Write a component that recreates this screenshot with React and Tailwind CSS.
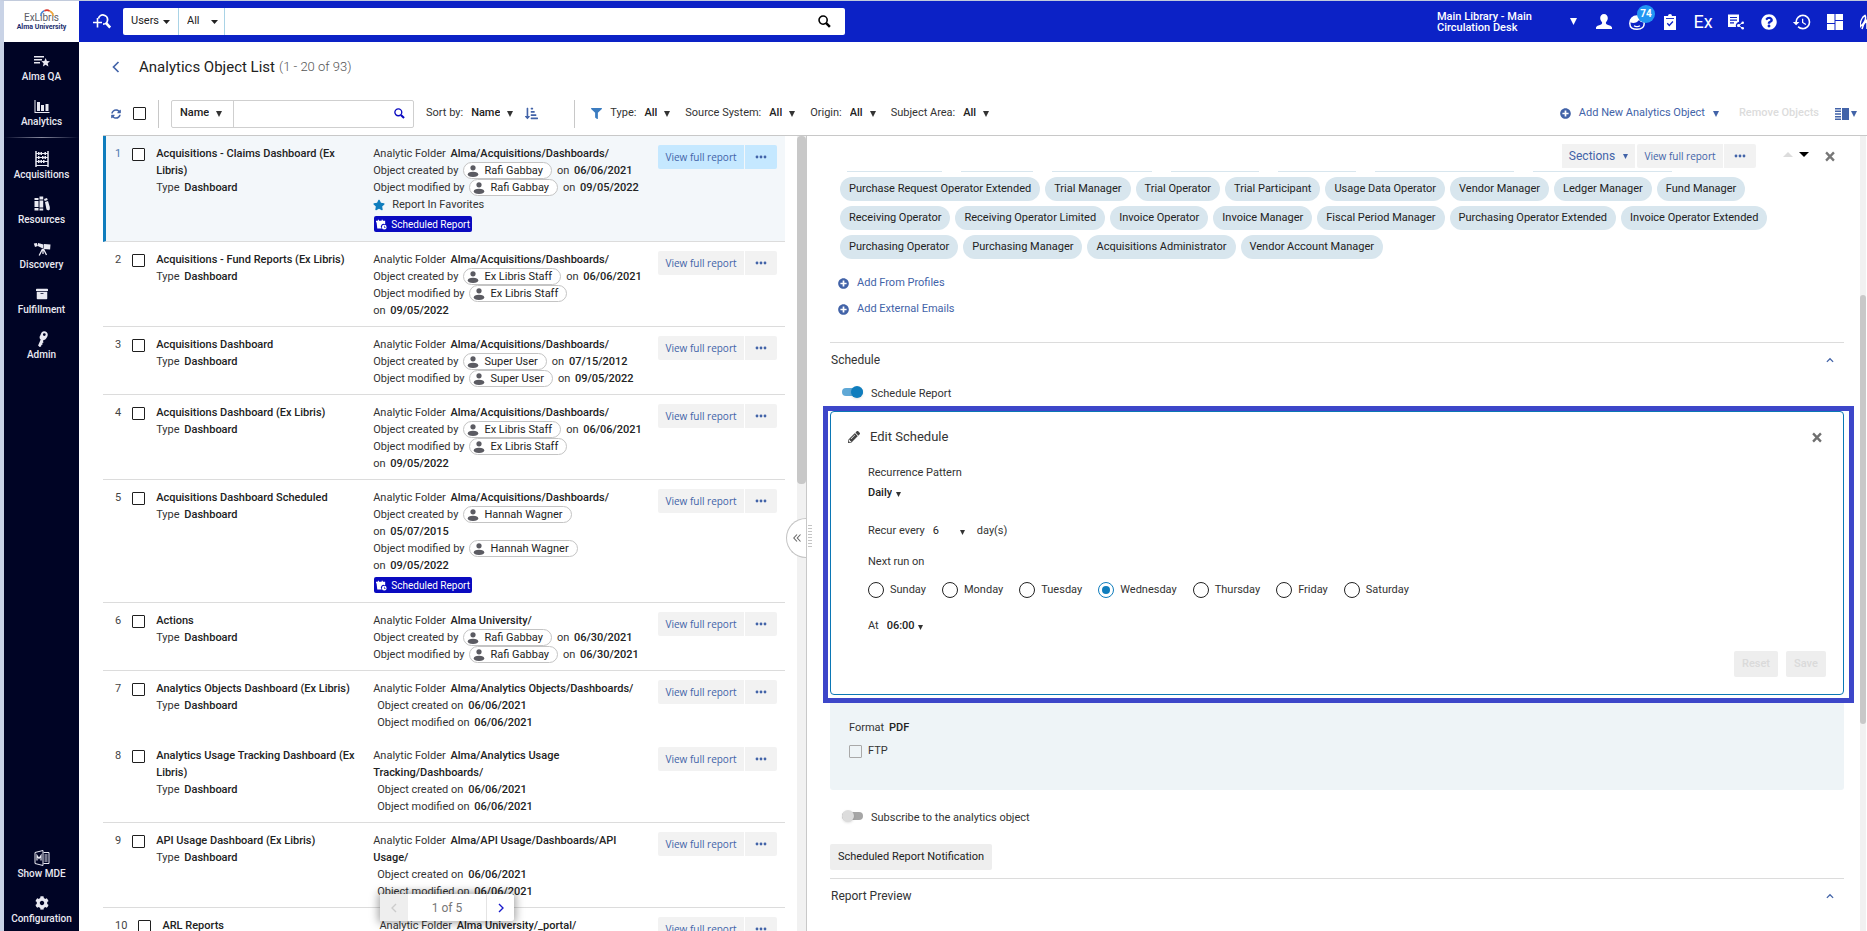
import { useId } from "react";
import {
  FaArchive,
  FaCog,
  FaFilter,
  FaPencilAlt,
  FaPlusCircle,
  FaQuestionCircle,
  FaSortAmountDownAlt,
  FaStar,
  FaSyncAlt,
} from "react-icons/fa";
import { MdHistory } from "react-icons/md";

/* ---------- icons ---------- */

function Caret({ className = "h-[6px] w-[6px]", up = false }) {
  return (
    <svg viewBox="0 0 8 7" preserveAspectRatio="none" fill="currentColor" aria-hidden="true" className={`pointer-events-none shrink-0 ${className}`}>
      <path d={up ? "M0 7h8L4 0z" : "M0 0h8L4 7z"} />
    </svg>
  );
}

function Chevron({ dir, className }) {
  const d = { left: "M9 2 3 8l6 6", right: "M3 2l6 6-6 6", up: "M1 11l5-5 5 5" }[dir];
  return (
    <svg viewBox="0 0 12 16" fill="none" stroke="currentColor" strokeWidth="2" aria-hidden="true" className={className}>
      <path d={d} />
    </svg>
  );
}

function Magnifier({ className }) {
  return (
    <svg viewBox="0 0 14 14" fill="none" stroke="currentColor" aria-hidden="true" className={className}>
      <circle cx="5.5" cy="5.5" r="4.4" strokeWidth="1.7" />
      <path d="m8.8 8.8 4 4" strokeWidth="2.6" />
    </svg>
  );
}

function Close({ className }) {
  return (
    <svg viewBox="0 0 12 12" fill="none" stroke="currentColor" strokeWidth="2.8" aria-hidden="true" className={className}>
      <path d="M1.3 1 10.7 11M10.7 1 1.3 11" />
    </svg>
  );
}

function Dots() {
  return (
    <svg viewBox="0 0 12 4" fill="currentColor" aria-hidden="true" className="h-1 w-3">
      <circle cx="2" cy="2" r="1.4" />
      <circle cx="6" cy="2" r="1.4" />
      <circle cx="10" cy="2" r="1.4" />
    </svg>
  );
}

const navSvg = "h-4 w-4";

const QaIcon = () => (
  <svg viewBox="0 0 16 16" fill="currentColor" className={navSvg}>
    <path d="M0 3h10v1.400H0zM0 6h8v1.400H0zM0 9h6v1.400H0z" />
    <path d="m11.600 5 1.300 2.900 3.100.3-2.300 2.100.7 3.100-2.800-1.600-2.700 1.600.7-3.100L7.300 8.200l3.100-.3z" />
  </svg>
);
const ChartIcon = () => (
  <svg viewBox="0 0 16 16" fill="currentColor" className={navSvg}>
    <path d="M.5 2h1v12h14v1H.5zM3 4h3v9H3zM7 7h3v6H7zM11.500 6h3v7h-3z" />
  </svg>
);
const AbacusIcon = () => (
  <svg viewBox="0 0 16 16" className={navSvg}>
    <path d="M2 0v16M14 0v16" stroke="currentColor" strokeWidth="1.500" />
    <path d="M2 2.500h12M2 6.500h12M2 10.500h12M2 14.500h12" stroke="currentColor" strokeWidth="1" />
    <path d="M4 1h1.500v3H4zM6.500 1H8v3H6.500zM10.500 1H12v3h-1.500zM4 5h1.500v3H4zM8 5h1.500v3H8zM10.500 5H12v3h-1.500zM4 9h1.500v3H4zM6.500 9H8v3H6.500zM9 9h1.500v3H9z" fill="currentColor" />
  </svg>
);
const BooksIcon = () => (
  <svg viewBox="0 0 16 16" fill="currentColor" className={navSvg}>
    <path d="M.5 2h4v2h-4zM.5 5h4v6h-4zM.5 12h4v2.500h-4zM5.500.5h3.700v3H5.500zM5.500 4.500h3.700v7H5.500zM5.500 12.500h3.700v2H5.500z" />
    <path d="m10 3 3-1 .7 2-3 1zM11 6l3-1 1.800 6v2.500l-1.500 1-1.800-1z" />
  </svg>
);
const TelescopeIcon = () => (
  <svg viewBox="0 0 18 16" fill="currentColor" className="h-4 w-[18px]">
    <path d="m.8 2.500 3-.5 1 3-2.800 1zM5 2l5.500 1.500-.7 4L4.800 5zM11 3l6.500.6-.4 5L10.400 8z" />
    <path d="m9.500 8-3.300 6.500M10 8v5M10.500 8l3 6" stroke="currentColor" strokeWidth="1.300" fill="none" />
  </svg>
);
const KeyIcon = () => (
  <svg viewBox="0 0 16 16" className={navSvg}>
    <path
      fillRule="evenodd"
      fill="currentColor"
      d="M9.200.4c2.900-.5 4.900 1.300 4.500 3.900-.2 1.700-1.200 2.400-1.600 3.300-.5 1-1.500 1.500-2.500 1.300l-.6 1.200.5 1.300-1.200.6.3 1.400-1.200.6-.3 1.400-1.500.6-1.500-1.600L6.700 8.500c-1-.6-1.400-1.900-.9-3.200C6.800 4 6.900 1 9.200.4zm1.100 1.800a1.400 1.400 0 1 0 0 2.800 1.400 1.400 0 0 0 0-2.800z"
    />
  </svg>
);
const MdeIcon = () => (
  <svg viewBox="0 0 16 16" fill="none" stroke="currentColor" strokeWidth="1" className={navSvg}>
    <path d="M1 2.500 9 .5v15l-8-2z" />
    <path d="M9.500 2.500h5.500v11H9.500M10.500 5h3M10.500 7h3M10.500 9h3M10.500 11h3" />
    <path d="M3 10.500v-5l2 3 2-3v5" strokeWidth="1.200" />
  </svg>
);

function UserGlyph({ className }) {
  return (
    <svg viewBox="0 0 16 16" fill="currentColor" aria-hidden="true" className={className}>
      <path d="M8 0c2.300 0 3.800 1.700 3.800 4 0 1.700-.7 3.200-1.800 4.200-.3.900 0 1.700.9 2.200 2.700.8 5.100 1.700 5.100 3.200V15H0v-1.400c0-1.500 2.400-2.400 5.100-3.200.9-.5 1.200-1.300.9-2.200C4.900 7.200 4.200 5.700 4.200 4 4.200 1.700 5.700 0 8 0z" />
    </svg>
  );
}

function PersonGlyph() {
  return (
    <svg viewBox="0 0 12 12" fill="#5b5b62" aria-hidden="true" className="mx-[3px] h-3 w-3 shrink-0">
      <circle cx="6" cy="2.800" r="2.600" />
      <ellipse cx="6" cy="9.300" rx="5.200" ry="2.600" />
    </svg>
  );
}

function CalendarGlyph() {
  return (
    <svg viewBox="0 0 12 12" fill="currentColor" aria-hidden="true" className="h-[11px] w-[11px] shrink-0">
      <path d="M0 2h2V.8h1.200V2h3V.8h1.200V2H10v1.500H0zM.6 3.500H10v2.200a3 3 0 0 0-3.800 4.600H1.400z" />
      <path fillRule="evenodd" d="M9 6.300a2.600 2.600 0 1 1 0 5.200 2.600 2.600 0 0 1 0-5.200zm-.3 1v2l1.600.6.3-.6-1.200-.5V7.300z" />
    </svg>
  );
}

/* ---------- controls ---------- */

function Select({ label, name, value, options = [], strong = true, gap = "gap-[7px]", caret, width = "[field-sizing:content]" }) {
  const id = useId();
  return (
    <span className="flex items-center whitespace-nowrap">
      {label && <label htmlFor={id} className="mr-2">{label}</label>}
      <span className={`flex items-center ${gap}`}>
        <select id={id} aria-label={name} defaultValue={value} className={`appearance-none bg-transparent text-[#222] outline-none ${strong ? "font-medium" : ""} ${width}`}>
          <option>{value}</option>
          {options.map((o) => <option key={o}>{o}</option>)}
        </select>
        <Caret className={caret} />
      </span>
    </span>
  );
}

function Value({ children }) {
  return <b className="ml-0.5 font-medium text-[#222]">{children}</b>;
}

function Checkbox({ label, light }) {
  return (
    <input
      type="checkbox"
      aria-label={label}
      className={`h-[13px] w-[13px] shrink-0 appearance-none rounded-[1px] border checked:bg-[#0f7dbd] ${light ? "border-[#a9a9a9] bg-transparent" : "border-[#1f1f1f] bg-white"}`}
    />
  );
}

function Toggle({ id, defaultChecked }) {
  return (
    <input
      id={id}
      type="checkbox"
      role="switch"
      defaultChecked={defaultChecked}
      className="mb-1 flex h-2 w-[21px] shrink-0 appearance-none items-center rounded-full bg-[#a6a6a6] before:h-3 before:w-3 before:rounded-full before:bg-[#dcdcdc] before:shadow-sm before:content-[''] checked:justify-end checked:bg-[#5fa8d6] checked:before:bg-[#0f7dbd]"
    />
  );
}

function ReportButtons({ active }) {
  const bg = active ? "bg-[#c5e8ff]" : "bg-[#f2f2f2]";
  return (
    <span className="flex shrink-0 gap-px text-[#4263a8]">
      <button type="button" className={`flex h-6 w-[86px] items-center justify-center whitespace-nowrap rounded-l-[2px] font-['Open_Sans','Noto_Sans',sans-serif] text-[10px] ${bg}`}>View full report</button>
      <button type="button" aria-label="More actions" className={`flex h-6 w-8 items-center justify-center rounded-r-[2px] ${bg}`}><Dots /></button>
    </span>
  );
}

/* ---------- data ---------- */

const topNav = [
  ["Alma QA", QaIcon],
  ["Analytics", ChartIcon],
];
const mainNav = [
  ["Acquisitions", AbacusIcon],
  ["Resources", BooksIcon],
  ["Discovery", TelescopeIcon],
  ["Fulfillment", () => <FaArchive size={12} />],
  ["Admin", KeyIcon],
];
const bottomNav = [
  ["Show MDE", MdeIcon],
  ["Configuration", () => <FaCog size={14} />],
];

const rows = [
  { title: "Acquisitions - Claims Dashboard (Ex Libris)", folder: "Alma/Acquisitions/Dashboards/", by: "Rafi Gabbay", created: "06/06/2021", modified: "09/05/2022", favorite: true, scheduled: true, active: true },
  { title: "Acquisitions - Fund Reports (Ex Libris)", folder: "Alma/Acquisitions/Dashboards/", by: "Ex Libris Staff", created: "06/06/2021", modified: "09/05/2022" },
  { title: "Acquisitions Dashboard", folder: "Alma/Acquisitions/Dashboards/", by: "Super User", created: "07/15/2012", modified: "09/05/2022" },
  { title: "Acquisitions Dashboard (Ex Libris)", folder: "Alma/Acquisitions/Dashboards/", by: "Ex Libris Staff", created: "06/06/2021", modified: "09/05/2022" },
  { title: "Acquisitions Dashboard Scheduled", folder: "Alma/Acquisitions/Dashboards/", by: "Hannah Wagner", created: "05/07/2015", modified: "09/05/2022", scheduled: true },
  { title: "Actions", folder: "Alma University/", by: "Rafi Gabbay", created: "06/30/2021", modified: "06/30/2021" },
  { title: "Analytics Objects Dashboard (Ex Libris)", folder: "Alma/Analytics Objects/Dashboards/", created: "06/06/2021", modified: "06/06/2021", noRule: true },
  { title: "Analytics Usage Tracking Dashboard (Ex Libris)", folder: "Alma/Analytics Usage Tracking/Dashboards/", created: "06/06/2021", modified: "06/06/2021" },
  { title: "API Usage Dashboard (Ex Libris)", folder: "Alma/API Usage/Dashboards/API Usage/", created: "06/06/2021", modified: "06/06/2021" },
  { title: "ARL Reports", folder: "Alma University/_portal/", created: "06/06/2021", modified: "06/06/2021" },
];

const roles = [
  "Purchase Request Operator Extended", "Trial Manager", "Trial Operator", "Trial Participant", "Usage Data Operator",
  "Vendor Manager", "Ledger Manager", "Fund Manager", "Receiving Operator", "Receiving Operator Limited",
  "Invoice Operator", "Invoice Manager", "Fiscal Period Manager", "Purchasing Operator Extended",
  "Invoice Operator Extended", "Purchasing Operator", "Purchasing Manager", "Acquisitions Administrator",
  "Vendor Account Manager",
];

const days = ["Sunday", "Monday", "Tuesday", "Wednesday", "Thursday", "Friday", "Saturday"];

/* ---------- layout ---------- */

function NavItems({ items }) {
  return items.map(([label, Icon]) => (
    <a key={label} href="#" className="flex h-[45px] flex-col items-center pt-2 text-[#e9e9f2]">
      <span className="flex h-[18px] items-center"><Icon /></span>
      <span className="text-[10px] font-medium leading-[14px]">{label}</span>
    </a>
  ));
}

function Sidebar() {
  return (
    <aside className="flex w-[75px] shrink-0 flex-col bg-[#000425]">
      <a href="#" aria-label="Ex Libris Alma University" className="flex h-[41px] flex-col items-center justify-center bg-white">
        <span className="relative text-[10px] leading-[10px] text-[#5c5c66]">
          ExLibris
          <svg viewBox="0 0 16 8" fill="none" strokeWidth="1.800" className="absolute -top-1 left-4 h-[7px] w-[14px]">
            <path d="M1 8C1 5.500 2.500 3 5 2" stroke="#4a86d8" />
            <path d="M5 2c2-1 4.500-.8 6 .3" stroke="#d8342c" />
            <path d="M11 2.300C13.500 3.500 15 5.500 15 8" stroke="#f0a63a" />
          </svg>
        </span>
        <span className="text-[7px] font-bold leading-[8px] text-[#1d2f6f]">Alma University</span>
      </a>
      <nav className="flex flex-1 flex-col pt-0.5">
        <NavItems items={topNav} />
        <div className="mt-[3px] mb-1 h-px bg-gradient-to-r from-transparent via-[#8a8ca0] to-transparent" />
        <NavItems items={mainNav} />
        <div className="mt-auto"><NavItems items={bottomNav} /></div>
      </nav>
    </aside>
  );
}

function HeaderIcon({ label, children }) {
  return <button type="button" aria-label={label} className="relative flex h-4 w-4 shrink-0 items-center justify-center">{children}</button>;
}

function Header() {
  return (
    <header className="flex h-[41px] shrink-0 items-center bg-[#0c22c6] pl-3 text-white">
      <button type="button" aria-label="Advanced search" className="ml-0.5">
        <svg viewBox="0 0 18 15" fill="none" stroke="currentColor" className="h-[15px] w-[18px]">
          <path d="M0 8.500h9M4.500 4v9.500" strokeWidth="1.600" />
          <path d="M5.500 4.500a4.600 4.600 0 1 1 4.500 5.700" strokeWidth="1.800" />
          <path d="m13 9 4.200 4.500" strokeWidth="2.600" />
        </svg>
      </button>
      <div className="ml-3 flex h-[27px] w-[722px] items-center rounded-[2px] bg-white text-[11px] text-[#222]">
        <span className="flex h-full w-[56px] shrink-0 items-center border-r border-[#a9d3e6] pl-2">
          <Select name="Search type" value="Users" options={["Titles"]} strong={false} gap="gap-1" caret="h-1 w-[7px]" />
        </span>
        <span className="flex h-full w-[46px] shrink-0 items-center border-r border-[#a9d3e6] pl-2">
          <Select name="Search field" value="All" options={["Name"]} strong={false} gap="gap-[11px]" caret="h-1 w-[7px]" />
        </span>
        <input type="text" aria-label="Search" className="h-full min-w-0 flex-1 px-2 outline-none" />
        <button type="button" aria-label="Run search" className="mr-3.5 text-black"><Magnifier className="h-[13px] w-[13px]" /></button>
      </div>
      <div className="-mr-[9px] ml-auto flex shrink-0 items-center">
        <button type="button" className="flex items-center text-left text-[11px] font-medium leading-[11px]">
          <span className="w-[133px]">Main Library - Main<br />Circulation Desk</span>
          <Caret className="mr-[19px] h-[7px] w-[7px]" />
        </button>
        <div className="flex items-center gap-[17px]">
          <HeaderIcon label="User menu"><UserGlyph className="h-4 w-4" /></HeaderIcon>
          <HeaderIcon label="Assistant">
            <svg viewBox="0 0 16 16" fill="none" stroke="currentColor" strokeWidth="1.500" className="h-4 w-4">
              <path d="M.8 9.500C.8 5 4 2 8 2s7.200 3 7.200 7.500S12 15.200 8 15.200.8 14 .8 9.500z" />
              <path fill="currentColor" stroke="none" d="M1 8C1 5 4 2 8 2s7 2 7 6c-3 1-4-1-5-2-2 3-6 4-9 2z" />
              <path d="M5 11.800c1.500 1.200 4.500 1.200 6 0" strokeWidth="1.200" />
            </svg>
            <span className="absolute -top-[9px] left-2 flex h-[18px] w-[18px] items-center justify-center rounded-full bg-[#2196f3] text-[10px] font-bold">74</span>
          </HeaderIcon>
          <HeaderIcon label="Tasks">
            <svg viewBox="0 0 16 16" fill="currentColor" className="h-4 w-4">
              <path d="M2 2h4a2 2 0 0 1 4 0h4v14H2z" />
              <path d="M4 4.500h8" stroke="#0c22c6" strokeWidth=".9" />
              <path d="m5.300 9.300 2 2.200 3.600-4" fill="none" stroke="#0c22c6" strokeWidth="1.300" />
            </svg>
          </HeaderIcon>
          <HeaderIcon label="Ex Libris"><span className="text-[18px] leading-4">Ex</span></HeaderIcon>
          <HeaderIcon label="Share report">
            <svg viewBox="0 0 16 16" className="h-4 w-4">
              <path d="M0 .5h11v7.300a4 4 0 0 0-3 5.200H0z" fill="currentColor" />
              <path d="M2 3.500h7M2 6.200h7M2 8.900h4" stroke="#0c22c6" strokeWidth="1.200" />
              <path d="M15 8.500 10.500 11.500l4.500 3" stroke="currentColor" strokeWidth="1" fill="none" />
              <circle cx="14.700" cy="8.800" r="1.300" fill="currentColor" />
              <circle cx="10.500" cy="11.500" r="1.500" fill="currentColor" />
              <circle cx="14.700" cy="14.300" r="1.300" fill="currentColor" />
            </svg>
          </HeaderIcon>
          <HeaderIcon label="Help"><FaQuestionCircle size={16} /></HeaderIcon>
          <HeaderIcon label="History"><MdHistory size={20} className="shrink-0" /></HeaderIcon>
          <HeaderIcon label="Widgets">
            <svg viewBox="0 0 16 16" fill="currentColor" className="h-4 w-4">
              <path d="M0 0h7.500v9H0zM8.500 0H16v6H8.500zM0 10h7.500v6H0zM8.500 7H16v9H8.500z" />
            </svg>
          </HeaderIcon>
          <HeaderIcon label="Accessibility">
            <svg viewBox="0 0 16 16" fill="none" stroke="currentColor" strokeWidth="1.500" className="h-4 w-4">
              <path d="M0 13C0 8 2 3 5 1.500 6.500 4 5 9 0 13zM2 15c1-4 3-7 5-9v9" />
            </svg>
          </HeaderIcon>
        </div>
      </div>
    </header>
  );
}

function Filter({ label }) {
  return <Select label={label} value="All" options={["Mine"]} />;
}

function Toolbar() {
  return (
    <div className="flex h-[43px] shrink-0 items-center whitespace-nowrap pl-2">
      <button type="button" aria-label="Refresh" className="text-[#4263a8]"><FaSyncAlt size={10} /></button>
      <span className="ml-3 flex"><Checkbox label="Select all" /></span>
      <span className="ml-3 h-7 w-px bg-[#c8c8c8]" />
      <div className="ml-3 flex h-7 w-[243px] items-center rounded-[2px] border border-[#cfcfcf]">
        <span className="flex h-full w-[62px] shrink-0 items-center border-r border-[#cfcfcf] pl-2">
          <Select name="Search in" value="Name" options={["Type"]} />
        </span>
        <input type="text" aria-label="Filter list" className="h-full min-w-0 flex-1 px-2 outline-none" />
        <button type="button" aria-label="Search list" className="mr-2 text-[#0a0ac0]"><Magnifier className="h-[11px] w-[11px]" /></button>
      </div>
      <span className="ml-3"><Select label="Sort by:" value="Name" options={["Type"]} /></span>
      <button type="button" aria-label="Sort direction" className="ml-3 text-[#4263a8]"><FaSortAmountDownAlt size={13} /></button>
      <span className="ml-9 h-7 w-px bg-[#c8c8c8]" />
      <FaFilter size={11} className="ml-4 text-[#3b7cc0]" />
      <div className="ml-2 flex items-center gap-[15px]">
        <Filter label="Type:" />
        <Filter label="Source System:" />
        <Filter label="Origin:" />
        <Filter label="Subject Area:" />
      </div>
      <div className="mr-2.5 ml-auto flex items-center text-[#4263a8]">
        <button type="button" className="flex items-center">
          <FaPlusCircle size={11} className="mr-2" />
          Add New Analytics Object
          <Caret className="ml-2 h-[6px] w-[6px]" />
        </button>
        <button type="button" disabled className="ml-5 font-medium text-[#dcdcdc]">Remove Objects</button>
        <button type="button" aria-label="Layout" className="ml-4 flex items-center gap-0.5">
          <svg viewBox="0 0 14 12" fill="currentColor" className="h-3 w-3.5">
            <path d="M0 0h6v1.400H0zM0 2.600h6V4H0zM0 5.300h6v1.400H0zM0 8h6v1.400H0zM0 10.600h6V12H0zM7 0h7v12H7z" />
          </svg>
          <Caret className="h-[6px] w-[6px]" />
        </button>
      </div>
    </div>
  );
}

function Stamp({ verb, by, date }) {
  if (!by) {
    return <div className="pl-1">Object {verb} on <Value>{date}</Value></div>;
  }
  return (
    <div className="flex flex-wrap items-center">
      <span className="mr-[5px]">Object {verb} by</span>
      <a href="#" className="mr-[5px] flex h-[17px] items-center rounded-full border border-[#c4c4c4] bg-white pr-2 text-[#222]">
        <PersonGlyph />
        <span className="ml-0.5">{by}</span>
      </a>
      <span className="whitespace-nowrap">on <Value>{date}</Value></span>
    </div>
  );
}

function Row({ row, index }) {
  return (
    <li className={`flex items-start pt-[9px] pr-2 pb-[7px] ${row.noRule ? "" : "border-b border-b-[#dcdcdc]"} ${row.active ? "border-l-[3px] border-l-[#0f7dbd] bg-[#f3f7fa] pl-[9px]" : "pl-3"}`}>
      <span className={`mr-[11px] ${row.active ? "text-[#4d7ab0]" : "text-[#444]"}`}>{index}</span>
      <span className="mt-[3px] flex"><Checkbox label={`Select ${row.title}`} /></span>
      <div className="ml-[11px] w-[217px] pr-2">
        <div className="font-medium text-[#222]">{row.title}</div>
        <div>Type <Value>Dashboard</Value></div>
      </div>
      <div className="min-w-0 flex-1 pr-3.5">
        <div>Analytic Folder <Value>{row.folder}</Value></div>
        <Stamp verb="created" by={row.by} date={row.created} />
        <Stamp verb="modified" by={row.by} date={row.modified} />
        {row.favorite && (
          <div className="flex items-center gap-[7px]"><FaStar size={12} className="text-[#0f7dbd]" />Report In Favorites</div>
        )}
        {row.scheduled && (
          <div className="mt-[3px] mb-0.5 ml-px flex h-4 w-[98px] items-center justify-center gap-1 whitespace-nowrap rounded-[2px] bg-[#0a0ac0] text-[10px] text-white">
            <CalendarGlyph />Scheduled Report
          </div>
        )}
      </div>
      <ReportButtons active={row.active} />
    </li>
  );
}

function ListPane() {
  return (
    <section className="relative flex w-[704px] shrink-0 border-r border-[#c8c8c8]">
      <ul className="min-w-0 flex-1 overflow-hidden leading-[17px]">
        {rows.map((row, i) => <Row key={row.title} row={row} index={i + 1} />)}
      </ul>
      <div className="ml-3 w-[9px] shrink-0 bg-[#f1f1f1]">
        <div className="h-7/16 rounded-[4px] bg-[#c8c8c8]" />
      </div>
      <button type="button" aria-label="Collapse list" className="absolute top-[48%] right-0 flex h-10 w-5 items-center justify-center rounded-l-full border border-r-0 border-[#c4c4c4] bg-white text-[#666]">
        <svg viewBox="0 0 8 8" fill="none" stroke="currentColor" strokeWidth="1.100" className="h-2 w-2">
          <path d="M4 .5.800 4 4 7.500M7.500.5 4.300 4l3.200 3.500" />
        </svg>
      </button>
      <div className="absolute bottom-[10px] left-[277px] flex h-[27px] w-[134px] items-stretch rounded-[2px] bg-white text-[12px] text-[#777] shadow-[0_0_9px_2px_rgba(0,0,0,0.35)]">
        <button type="button" disabled aria-label="Previous page" className="flex w-7 items-center justify-center bg-[#eee] text-[#ccc]"><Chevron dir="left" className="h-3 w-2" /></button>
        <span className="flex flex-1 items-center justify-center">1 of 5</span>
        <button type="button" aria-label="Next page" className="flex w-7 items-center justify-center border-l border-[#e4e4e4] text-[#1a1acb]"><Chevron dir="right" className="h-3 w-2" /></button>
      </div>
    </section>
  );
}

function SectionTitle({ children }) {
  return (
    <h2 className="flex h-9 items-center justify-between border-t border-[#dcdcdc] pr-2.5 pb-0.5 pl-px text-[12px]">
      {children}
      <button type="button" aria-label="Collapse section" className="text-[#4263a8]"><Chevron dir="up" className="h-[10px] w-[8px]" /></button>
    </h2>
  );
}

function EditSchedule() {
  return (
    <div className="-mr-[10px] -ml-[7px] border-[5px] border-[#3d46c9] pr-[5px] pb-[3px] pl-0.5">
      <form className="rounded-[4px] border border-[#0b77b5] pt-4 pr-[17px] pb-[17px] pl-[37px] leading-[18px]" onSubmit={(e) => e.preventDefault()}>
        <div className="-ml-5 flex h-[18px] items-center text-[13px]">
          <FaPencilAlt size={12} className="mr-2.5 text-[#444]" />
          Edit Schedule
          <button type="button" aria-label="Close" className="mr-1 ml-auto text-[#6f6f6f]"><Close className="h-[11px] w-[10px]" /></button>
        </div>
        <label htmlFor="pattern" className="mt-[18px] block">Recurrence Pattern</label>
        <div className="mt-0.5 flex items-center gap-1">
          <select id="pattern" className="appearance-none bg-transparent font-medium text-[#222] outline-none [field-sizing:content]">
            <option>Daily</option>
            <option>Weekly</option>
            <option>Monthly</option>
          </select>
          <Caret className="mt-0.5 h-[5px] w-[5px]" />
        </div>
        <div className="mt-5 flex items-center">
          <Select label="Recur every" value="6" options={["7"]} strong={false} caret="mt-0.5 h-[5px] w-[5px]" gap="gap-0" width="w-[27px]" />
          <span className="ml-3">day(s)</span>
        </div>
        <div className="mt-[13px]" id="next-run">Next run on</div>
        <div role="radiogroup" aria-labelledby="next-run" className="mt-2.5 flex gap-4">
          {days.map((day) => (
            <label key={day} className="flex items-center gap-1.5">
              <input type="radio" name="day" defaultChecked={day === "Wednesday"} className="h-4 w-4 appearance-none rounded-full border border-[#222] bg-white bg-clip-content p-[3px] checked:border-[#0f7dbd] checked:bg-[#0f7dbd]" />
              {day}
            </label>
          ))}
        </div>
        <div className="mt-[18px] flex">
          <Select label="At" value="06:00" options={["07:00"]} gap="gap-[3px]" caret="mt-0.5 h-[5px] w-[5px]" />
        </div>
        <div className="mt-4 flex justify-end gap-2 text-[#dadada]">
          <button type="button" disabled className="h-[26px] w-11 rounded-[2px] bg-[#eee] font-medium">Reset</button>
          <button type="submit" disabled className="h-[26px] w-10 rounded-[2px] bg-[#eee] font-medium">Save</button>
        </div>
      </form>
    </div>
  );
}

function DetailPane() {
  return (
    <section className="flex min-w-0 flex-1">
      <span className="mt-[389px] ml-px h-6 w-1 shrink-0 bg-[repeating-linear-gradient(to_bottom,#c4c4c4_0_1px,transparent_1px_3px)]" aria-hidden="true" />
      <div className="min-w-0 flex-1 overflow-hidden pr-4 pl-[18px]">
        <div className="flex h-[35px] items-center justify-end pt-[5px]">
          <button type="button" className="mr-0.5 flex h-6 w-[73px] items-center justify-center gap-2 bg-[#f2f2f2] text-[12px] text-[#4263a8]">
            Sections<Caret className="h-[5px] w-[5px]" />
          </button>
          <ReportButtons />
          <button type="button" aria-label="Previous record" disabled className="mb-1 ml-[27px] text-[#dcdcdc]"><Caret up className="h-[5px] w-[10px]" /></button>
          <button type="button" aria-label="Next record" className="mb-1 ml-1.5 text-black"><Caret className="h-[5px] w-[10px]" /></button>
          <button type="button" aria-label="Close record" className="mr-[9px] ml-4 text-[#777]"><Close className="h-[11px] w-[10px]" /></button>
        </div>
        <div className="flex h-px items-end gap-[19px] overflow-hidden pl-[17px]" aria-hidden="true">
          <span className="h-px w-[95px] bg-[#d8e6ee]" />
          <span className="h-px w-[72px] bg-[#d8e6ee]" />
          <span className="h-px w-[100px] bg-[#d8e6ee]" />
          <span className="h-px w-[88px] bg-[#d8e6ee]" />
          <span className="h-px w-[78px] bg-[#d8e6ee]" />
          <span className="h-px w-[139px] bg-[#d8e6ee]" />
          <span className="h-px w-[139px] bg-[#d8e6ee]" />
        </div>
        <ul className="mt-[5px] flex flex-wrap gap-[5px] pl-2.5">
          {roles.map((role) => (
            <li key={role} className="flex h-6 items-center rounded-full bg-[#d8e6ee] px-[9px] text-[#222]">{role}</li>
          ))}
        </ul>
        <div className="mt-[11px] mb-5 flex flex-col items-start pl-2 text-[#4263a8]">
          <button type="button" className="flex h-[26px] items-center gap-2"><FaPlusCircle size={11} />Add From Profiles</button>
          <button type="button" className="flex h-[26px] items-center gap-2"><FaPlusCircle size={11} />Add External Emails</button>
        </div>
        <SectionTitle>Schedule</SectionTitle>
        <div className="flex h-7 items-center gap-2 pt-1 pl-3">
          <Toggle id="schedule-report" defaultChecked />
          <label htmlFor="schedule-report">Schedule Report</label>
        </div>
        <EditSchedule />
        <div className="rounded-b-[3px] bg-[#eef4f7] pt-4 pb-[30px] pl-[19px] leading-[18px]">
          <div>Format <Value>PDF</Value></div>
          <label className="mt-[5px] flex items-center gap-1.5"><Checkbox label="FTP" light />FTP</label>
        </div>
        <div className="mt-[18px] flex h-[18px] items-center gap-2 pt-0.5 pl-3">
          <Toggle id="subscribe" />
          <label htmlFor="subscribe">Subscribe to the analytics object</label>
        </div>
        <button type="button" className="mt-[18px] mb-2 block h-[26px] rounded-[2px] bg-[#eee] px-2 text-[#222]">Scheduled Report Notification</button>
        <SectionTitle>Report Preview</SectionTitle>
      </div>
      <div className="mr-px flex w-[6px] shrink-0 flex-col bg-[#f1f1f1]">
        <div className="h-[20%]" />
        <div className="h-[54%] rounded-[3px] bg-[#c8c8c8]" />
      </div>
    </section>
  );
}

export default function App() {
  return (
    <div className="flex h-screen overflow-hidden border-t border-l-4 border-t-[#c2cbdc] border-l-[#c9d3e6] bg-white font-['Roboto','Liberation_Sans',sans-serif] text-[11px] text-[#333]">
      <Sidebar />
      <div className="flex min-w-0 flex-1 flex-col overflow-hidden">
        <Header />
        <main className="flex min-h-0 flex-1 flex-col pl-6">
          <div className="flex h-[50px] shrink-0 items-center text-[15px]">
            <a href="#" aria-label="Back" className="ml-2 text-[#4263a8]"><Chevron dir="left" className="h-[14px] w-[10px]" /></a>
            <h1 className="ml-[18px] text-[#222]">Analytics Object List</h1>
            <span className="ml-1 text-[13px] font-light text-[#555]">(1 - 20 of 93)</span>
          </div>
          <Toolbar />
          <div className="flex min-h-0 flex-1 border-t border-[#c8c8c8]">
            <ListPane />
            <DetailPane />
          </div>
        </main>
      </div>
    </div>
  );
}
